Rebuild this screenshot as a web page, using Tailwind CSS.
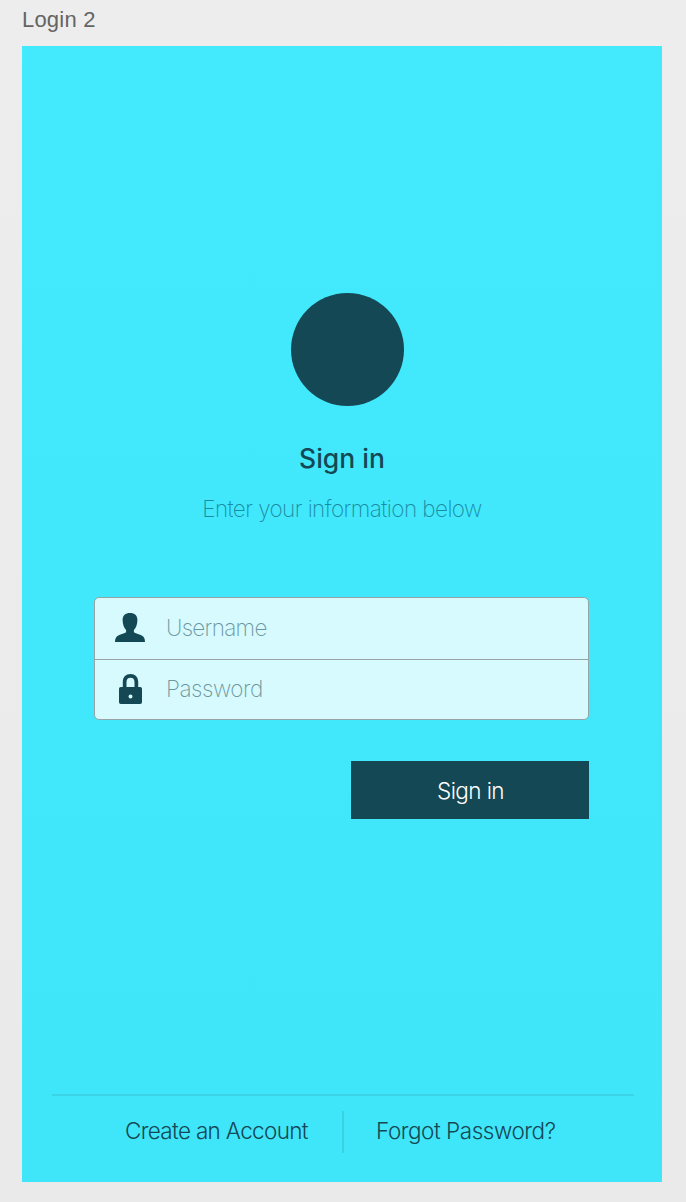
<!DOCTYPE html>
<html lang="en">
<head>
<meta charset="utf-8">
<title>Login 2</title>
<script src="https://cdn.jsdelivr.net/npm/@tailwindcss/browser@4"></script>
</head>
<body class="h-[1202px] overflow-hidden bg-linear-to-b from-[#ededed] to-[#eaeaea] px-[22px] font-['Inter',sans-serif] text-[#144854]">
<header class="h-[46px] pt-[5px] font-['Liberation_Sans',sans-serif] text-[22px] leading-[30px] tracking-[0.2px] whitespace-nowrap text-[#646464]">Login 2</header>
<main class="flex h-[1136px] w-[640px] flex-col bg-linear-to-b from-[#43eafe] to-[#3fe5f9] pt-[247px]">
  <div class="ml-[269px] size-[113px] shrink-0 rounded-full bg-[#144854]"></div>
  <h1 class="mt-[32px] h-[40px] text-center text-[26.5px] leading-[40px] font-medium whitespace-nowrap">Sign in</h1>
  <p class="mt-[15px] h-[32px] text-center text-[22.5px] leading-[32px] font-extralight tracking-[-0.57px] whitespace-nowrap text-[#1a8ca2]">Enter your information below</p>
  <form class="mt-[72px] ml-[72px] w-[495px]">
    <div class="h-[123px] rounded-[5px] border border-[#98a3a5] bg-[#d6fafd]">
      <label class="flex h-[62px] items-center border-b border-[#98a3a5] pl-[20px]">
        <svg class="-mt-[2px] h-[29px] w-[30px]" viewBox="0 0 30 29" fill="#144854"><path d="M15 0C19.6 0 22.4 2.5 22.4 7C22.4 11.3 20.9 15.1 18.9 17.1V19.2C20.2 20.2 23.9 20.9 26.7 22.5C29 23.8 30 25.5 30 29H0C0 25.5 1 23.8 3.3 22.5C6.1 20.9 9.8 20.2 11.1 19.2V17.1C9.1 15.1 7.6 11.3 7.6 7C7.6 2.5 10.4 0 15 0Z"/></svg>
        <span class="-mt-[2px] ml-[21px] text-[22.5px] font-extralight tracking-[-0.7px] text-[#6d979e]">Username</span>
      </label>
      <label class="flex h-[59px] items-center pl-[24px]">
        <svg class="-mt-px h-[30px] w-[23px]" viewBox="0 0 23 30" fill="#144854"><path fill-rule="evenodd" d="M3.8 13V7.9C3.8 3 7 0 11.5 0S19.2 3 19.2 7.9V13H21.2Q23 13 23 14.8V28.2Q23 30 21.2 30H1.8Q0 30 0 28.2V14.8Q0 13 1.8 13ZM7.5 13H15.5V8C15.5 5.2 14 3.7 11.5 3.7S7.5 5.2 7.5 8ZM11.5 20.6A2 2 0 1 0 11.5 24.6A2 2 0 1 0 11.5 20.6Z"/></svg>
        <span class="-mt-[2px] ml-[24px] text-[22.5px] font-extralight tracking-[-0.45px] text-[#6d979e]">Password</span>
      </label>
    </div>
    <button type="button" class="mt-[41px] ml-[257px] flex h-[58px] w-[238px] items-center justify-center bg-[#144854] pt-[2px] pl-[1px] text-[22.5px] font-light tracking-[-0.6px] text-white">Sign in</button>
  </form>
  <footer class="mt-auto mr-[28px] ml-[30px] flex h-[88px] border-t-2 border-[#3bd3e6] pt-[15px]">
    <a class="w-[290px] pl-[73px] text-[22.5px] leading-[40px] font-light tracking-[-0.67px] whitespace-nowrap">Create an Account</a>
    <div class="h-[42px] w-[2px] bg-[#3bd0e3]"></div>
    <a class="pl-[32px] text-[22.5px] leading-[40px] font-light tracking-[-0.46px] whitespace-nowrap">Forgot Password?</a>
  </footer>
</main>
</body>
</html>
